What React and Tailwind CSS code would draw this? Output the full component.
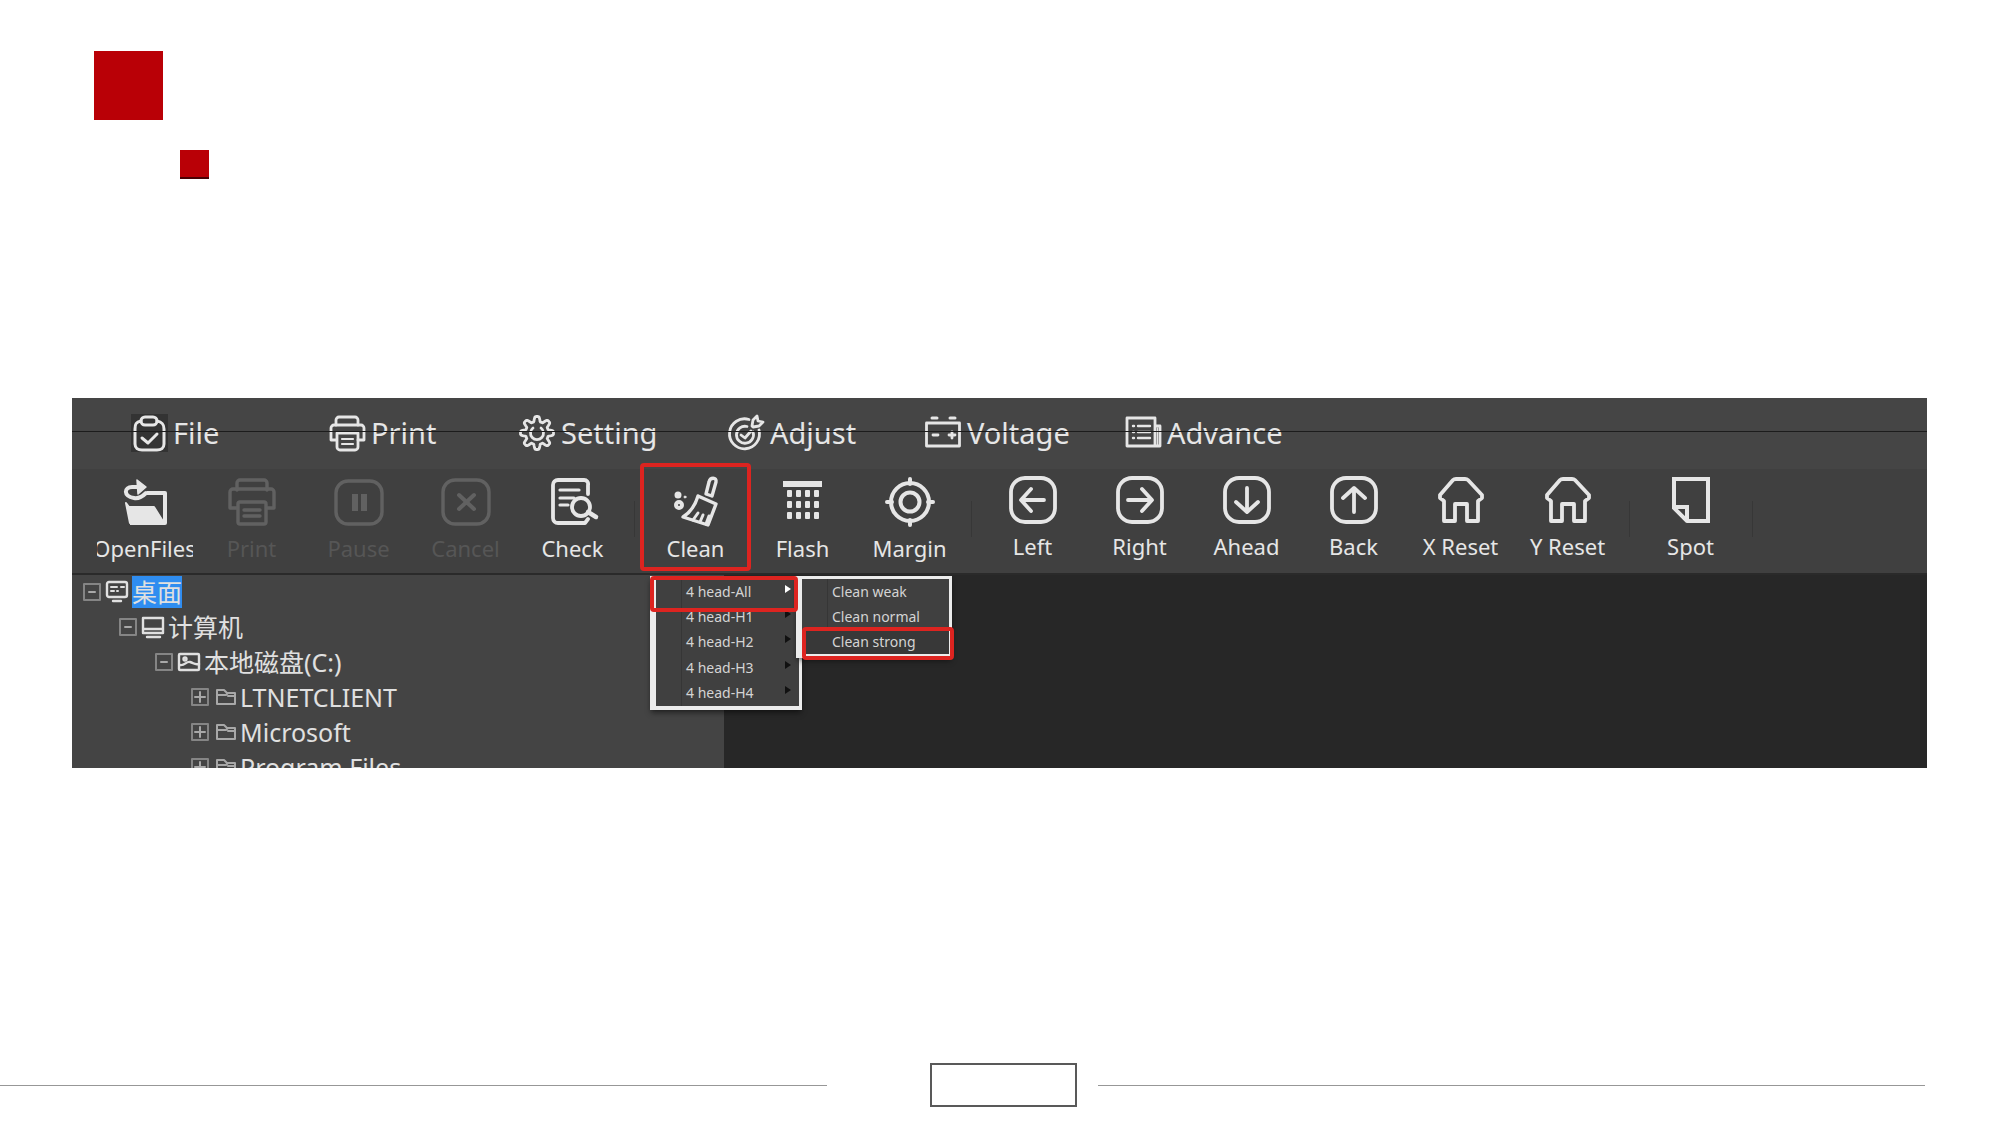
import React from "react";

function Svg({ size = 48, sw = 3, children }) {
  return (
    <svg
      width={size}
      height={size}
      viewBox={`0 0 ${size} ${size}`}
      fill="none"
      stroke="currentColor"
      strokeWidth={sw}
      strokeLinecap="round"
      strokeLinejoin="round"
      className="block shrink-0 overflow-visible"
      aria-hidden="true"
    >
      {children}
    </svg>
  );
}

/* ---------- menu bar icons (36 x 36) ---------- */
const gearPath = (() => {
  const pts = [];
  for (let i = 0; i < 144; i++) {
    const a = (i / 144) * Math.PI * 2;
    const wave = Math.max(-1, Math.min(1, Math.cos(8 * a) * 1.6));
    const r = 14 + 2.5 * wave;
    pts.push(`${(18 + r * Math.cos(a)).toFixed(2)} ${(18 + r * Math.sin(a)).toFixed(2)}`);
  }
  return `M${pts.join("L")}Z`;
})();

const FileIcon = () => (
  <Svg size={36} sw={3}>
    <rect x="0" y="-1" width="37" height="38" fill="#333333" stroke="none" />
    <path d="M10 6C5 7 4 9 4 14v15c0 4 3 6 7 6h15c4 0 7-2 7-6V14c0-5-2-7-7-8" />
    <rect x="10" y="2" width="16" height="8" rx="4" />
    <path d="M11 23l6 5 9-9" />
  </Svg>
);
const PrinterSmall = () => (
  <Svg size={36} sw={2.8}>
    <path d="M7 10V5a3 3 0 0 1 3-3h16a3 3 0 0 1 3 3v5" />
    <path d="M7 25H2V13a3 3 0 0 1 3-3h27a3 3 0 0 1 3 3v12h-6" />
    <path d="M8 18h21v14a3 3 0 0 1-3 3H11a3 3 0 0 1-3-3z" />
    <path d="M13 24h11M13 29h11" strokeWidth="2.200" />
  </Svg>
);
const GearIcon = () => (
  <Svg size={36} sw={2.8}>
    <path d={gearPath} />
    <path d="M14 13a6.500 6.500 0 1 0 8 0" />
  </Svg>
);
const TargetIcon = () => (
  <Svg size={36} sw={2.8}>
    <path d="M21 4.500A15 15 0 1 0 31 15" />
    <path d="M19 11.500A8.500 8.500 0 1 0 25 17" />
    <path d="M13 20l4 3 6-7" />
    <path d="M24 11l1-6 4-4 1 5 5 1-4 4-6 1z" />
  </Svg>
);
const BatteryIcon = () => (
  <Svg size={36} sw={2.8}>
    <rect x="1.500" y="8" width="33" height="23" />
    <path d="M7 3h5M25 3h5" strokeWidth="3" />
    <path d="M8 20h5M24 20h6M27 17v6" />
  </Svg>
);
const ListIcon = () => (
  <Svg size={36} sw={2.8}>
    <path d="M30 31H2V3h28v28h5V11h-5" />
    <path d="M8 11h1M13 11h12M8 17h1M13 17h12M8 23h1M13 23h12" strokeWidth="2.400" />
    <path d="M32.500 13v17" strokeWidth="1.500" />
  </Svg>
);

/* ---------- toolbar icons (48 x 48) ---------- */
const OpenIcon = () => (
  <Svg sw={4}>
    <path d="M5 25l3 4h25l10 16H9z" fill="currentColor" stroke="currentColor" strokeWidth="2" />
    <path d="M26 15h18v30H9" strokeLinecap="butt" />
    <path d="M13 20C2 18 3 9 11 9h6M13 20c5 1 8-1 12-5" />
    <path d="M16 2l9 7-8 7z" fill="currentColor" strokeWidth="1.500" />
  </Svg>
);
const PrinterBig = () => (
  <Svg sw={3.4}>
    <path d="M9 12V5a3 3 0 0 1 3-3h24a3 3 0 0 1 3 3v7" />
    <path d="M9 30H2V14a3 3 0 0 1 3-3h38a3 3 0 0 1 3 3v16h-7" />
    <rect x="10" y="24" width="28" height="22" rx="2" />
    <path d="M16 32h16M16 38h16" />
  </Svg>
);
const PauseIcon = () => (
  <Svg sw={3.4}>
    <rect x="1" y="3" width="46" height="43" rx="12" />
    <path d="M20 16v17M29 16v17" strokeWidth="6" strokeLinecap="butt" />
  </Svg>
);
const CancelIcon = () => (
  <Svg sw={3.4}>
    <rect x="1" y="2" width="46" height="44" rx="12" />
    <path d="M17 17l15 14M32 17L17 31" strokeWidth="4" />
  </Svg>
);
const CheckIcon = () => (
  <Svg sw={3.8}>
    <path d="M39 16V7a4 4 0 0 0-4-5H9a5 5 0 0 0-5 5v33a5 5 0 0 0 5 5h27l3-4" />
    <path d="M11 12h19M11 20h14M11 27h8" strokeWidth="3.200" />
    <circle cx="32" cy="29" r="9" />
    <path d="M39 34l8 5" strokeWidth="4.500" />
  </Svg>
);
const CleanIcon = () => (
  <Svg sw={3.4}>
    <path d="M37 4c1-5 8-5 7 0l-4 14-6-2z" />
    <path d="M26 18l18 8-8 21L11 39c8-5 12-11 15-21z" />
    <path d="M21 42l5-7M28 44l3-7M34 46l3-8" strokeWidth="3" />
    <circle cx="6" cy="17" r="2.500" fill="currentColor" strokeWidth="2" />
    <circle cx="13" cy="19" r="1" fill="currentColor" strokeWidth="1" />
    <circle cx="7" cy="27" r="3" strokeWidth="4" />
  </Svg>
);
const FlashIcon = () => (
  <Svg sw={3}>
    <g fill="currentColor" stroke="none">
      <rect x="4" y="3" width="39" height="6" />
      {[12, 23, 34].map((y) =>
        [8, 17, 26, 35].map((x) => <rect key={`${x}-${y}`} x={x} y={y} width="5" height="7" rx="1" />)
      )}
    </g>
  </Svg>
);
const MarginIcon = () => (
  <Svg sw={4}>
    <circle cx="24" cy="24" r="19" />
    <circle cx="24" cy="24" r="9.500" />
    <path d="M24 1v5M24 42v5M1 24h5M42 24h5" />
  </Svg>
);
const arrows = {
  left: "M35 24H13M22 13L12 24l10 11",
  right: "M12 24h22M26 13l10 11-10 11",
  down: "M24 12v23M13 26l11 10 11-10",
  up: "M24 36V13M13 22l11-10 11 10",
};
const ArrowIcon = ({ dir }) => (
  <Svg sw={3.8}>
    <rect x="2" y="2" width="44" height="44" rx="14" />
    <path d={arrows[dir]} />
  </Svg>
);
const HomeIcon = () => (
  <Svg sw={3.8}>
    <path d="M19 3h9q2 0 3 1l14 15v3l-4 3v20H30V28H18v17H7V25l-4-3v-3L16 4q1-1 3-1z" />
  </Svg>
);
const SpotIcon = () => (
  <Svg sw={4}>
    <path d="M7 3h34v42H20L7 32zM20 45V31H7" strokeLinejoin="miter" />
  </Svg>
);

/* ---------- tree icons ---------- */
const Expander = ({ open }) => (
  <Svg size={18} sw={2}>
    <rect x="1" y="1" width="16" height="16" stroke="#858585" />
    <path d={open ? "M6 9h6" : "M4 9h10M9 4v10"} stroke="#a8a8a8" />
  </Svg>
);
const DesktopIcon = () => (
  <Svg size={24} sw={2.4}>
    <rect x="2" y="2" width="20" height="15" rx="2" />
    <path d="M6 7h6M16 7h3M6 11h3M12 11h1" strokeWidth="2" />
    <path d="M8 21h8" />
  </Svg>
);
const ComputerIcon = () => (
  <Svg size={24} sw={2.4}>
    <path d="M2 3h20v15H2zM2 14h20M6 22h13" />
  </Svg>
);
const DiskIcon = () => (
  <Svg size={24} sw={2.4}>
    <rect x="2" y="4" width="20" height="16" rx="1" />
    <path d="M3 15c5 1 6-4 10-3s4 3 9 2" />
    <circle cx="8" cy="9" r="1.500" />
  </Svg>
);
const FolderIcon = () => (
  <Svg size={24} sw={2}>
    <path d="M4 19V5h7l3 3h8v11zM4 10h9l2-2M15 11h7" stroke="#a8a8a8" />
  </Svg>
);

const menus = [
  ["File", FileIcon],
  ["Print", PrinterSmall],
  ["Setting", GearIcon],
  ["Adjust", TargetIcon],
  ["Voltage", BatteryIcon],
  ["Advance", ListIcon],
];

function Tool({ label, icon, disabled, marked, raised, children }) {
  return (
    <div className="relative w-[107px] shrink-0">
      <button
        type="button"
        disabled={disabled}
        className={`flex h-full w-full flex-col items-center gap-1.5 ${raised ? "pt-[7px]" : "pt-[9px]"} ${
          disabled ? "text-[#616161]" : "text-[#e6e6e6]"
        }`}
      >
        {icon}
        <span
          className={`flex w-24 justify-center overflow-hidden whitespace-nowrap text-[22px] leading-8 ${
            disabled ? "text-[#565656]" : ""
          }`}
        >
          {label}
        </span>
      </button>
      {marked && (
        <span className="pointer-events-none absolute -inset-x-[2px] -top-1.5 bottom-[2px] rounded-sm border-4 border-[#dd2420]" />
      )}
      {children}
    </div>
  );
}

const Divider = () => (
  <div className="flex w-4 shrink-0 justify-center pt-[32px]">
    <span className="h-9 w-px bg-[#373737]" />
  </div>
);

function HeadMenu() {
  return (
    <div className="absolute left-2 top-[107px] z-10 text-[14px] leading-5 text-[#d4d4d4]">
      <ul className="grid h-[134px] w-[152px] grid-rows-5 border-b-4 border-l-[6px] border-r-[3px] border-t-[3px] border-[#ececec] bg-[#404040] shadow-md shadow-black/40">
        {["4 head-All", "4 head-H1", "4 head-H2", "4 head-H3", "4 head-H4"].map((t, i) => (
          <li key={t} className="flex">
            <span className="w-[26px] border-r border-[#363636]" />
            <button type="button" className="flex flex-1 items-center justify-between pl-1 pr-2 text-left">
              {t}
              <svg width="6" height="10" viewBox="0 0 6 10" className="mb-1.5" aria-hidden="true">
                <path d="M0 1l6 4-6 4z" fill={i === 0 ? "#ffffff" : "#111111"} />
              </svg>
            </button>
          </li>
        ))}
      </ul>
      <ul className="absolute left-[146px] top-0 grid h-[82px] w-[156px] grid-rows-3 border-b-4 border-l-[6px] border-r-[3px] border-t-[3px] border-[#ececec] bg-[#404040] shadow-md shadow-black/40">
        {["Clean weak", "Clean normal", "Clean strong"].map((t, i) => (
          <li key={t} className={i === 2 ? "flex bg-[#383838]" : "flex"}>
            <span className={i === 2 ? "w-[26px]" : "w-[26px] border-r border-[#363636]"} />
            <button type="button" className="flex flex-1 items-center pl-1 text-left">
              {t}
            </button>
          </li>
        ))}
      </ul>
      <span className="pointer-events-none absolute left-0 top-0 h-9 w-[148px] rounded-sm border-4 border-[#dd2420]" />
      <span className="pointer-events-none absolute left-[152px] top-[51px] h-[33px] w-[152px] rounded-sm border-4 border-[#dd2420]" />
    </div>
  );
}

const tree = [
  { label: "桌面", pad: "pl-[11px]", open: true, icon: <DesktopIcon />, selected: true },
  { label: "计算机", pad: "pl-[47px]", open: true, icon: <ComputerIcon /> },
  { label: "本地磁盘(C:)", pad: "pl-[83px]", open: true, icon: <DiskIcon /> },
  { label: "LTNETCLIENT", pad: "pl-[119px]", icon: <FolderIcon /> },
  { label: "Microsoft", pad: "pl-[119px]", icon: <FolderIcon /> },
  { label: "Program Files", pad: "pl-[119px]", icon: <FolderIcon /> },
];

export default function App() {
  return (
    <div className="flex min-h-screen flex-col bg-white font-['Noto_Sans','Noto_Sans_CJK_SC',sans-serif]">
      <header className="h-[398px] pl-[94px] pt-[51px]">
        <div className="size-[69px] bg-[#b90006]" />
        <div className="ml-[86px] mt-[30px] size-[29px] border-b-2 border-[#4a0003] bg-[#b90006]" />
      </header>

      <main className="ml-[72px] mr-[73px] overflow-hidden bg-[#444444]">
        <nav className="relative grid h-[71px] grid-cols-[198px_190px_209px_197px_200px_auto] justify-start bg-[#454545] pl-[59px] text-[29px] leading-9 text-[#e6e6e6]">
          {menus.map(([label, Icon]) => (
            <button key={label} type="button" className="flex items-center gap-1.5 pb-0.5 text-left">
              <Icon />
              <span>{label}</span>
            </button>
          ))}
          <span className="pointer-events-none absolute inset-x-0 top-[33px] h-px bg-[#1c1c1c]" />
        </nav>

        <div className="relative flex h-[106px] border-b-2 border-[#2a2a2a] bg-[#404040] pl-[19px]">
          <Tool label="OpenFiles" icon={<OpenIcon />} />
          <Tool label="Print" icon={<PrinterBig />} disabled />
          <Tool label="Pause" icon={<PauseIcon />} disabled />
          <Tool label="Cancel" icon={<CancelIcon />} disabled />
          <Tool label="Check" icon={<CheckIcon />} />
          <Divider />
          <Tool label="Clean" icon={<CleanIcon />} marked>
            <HeadMenu />
          </Tool>
          <Tool label="Flash" icon={<FlashIcon />} />
          <Tool label="Margin" icon={<MarginIcon />} />
          <Divider />
          <Tool label="Left" icon={<ArrowIcon dir="left" />} raised />
          <Tool label="Right" icon={<ArrowIcon dir="right" />} raised />
          <Tool label="Ahead" icon={<ArrowIcon dir="down" />} raised />
          <Tool label="Back" icon={<ArrowIcon dir="up" />} raised />
          <Tool label="X Reset" icon={<HomeIcon />} raised />
          <Tool label="Y Reset" icon={<HomeIcon />} raised />
          <Divider />
          <Tool label="Spot" icon={<SpotIcon />} raised />
          <Divider />
        </div>

        <div className="flex h-[193px]">
          <ul className="w-[652px] shrink-0 overflow-hidden bg-[#444444] text-[25px] leading-8 text-[#e0e0e0]">
            {tree.map((n) => (
              <li key={n.label} className={`flex h-[35px] items-center pb-0.5 ${n.pad}`}>
                <button type="button" aria-label={`Toggle ${n.label}`}>
                  <Expander open={n.open} />
                </button>
                <span className="ml-1">{n.icon}</span>
                <button type="button" className={n.selected ? "ml-[3px] bg-[#2f8df0]" : "ml-[3px]"}>
                  {n.label}
                </button>
              </li>
            ))}
          </ul>
          <section className="flex-1 bg-[#272727]" aria-label="Preview" />
        </div>
      </main>

      <footer className="mt-auto flex items-center pb-[18px] pr-[75px]">
        <span className="h-px flex-1 bg-[#979797]" />
        <span className="ml-[103px] mr-[21px] h-11 w-[147px] border-2 border-[#595959]" />
        <span className="h-px flex-1 bg-[#979797]" />
      </footer>
    </div>
  );
}
